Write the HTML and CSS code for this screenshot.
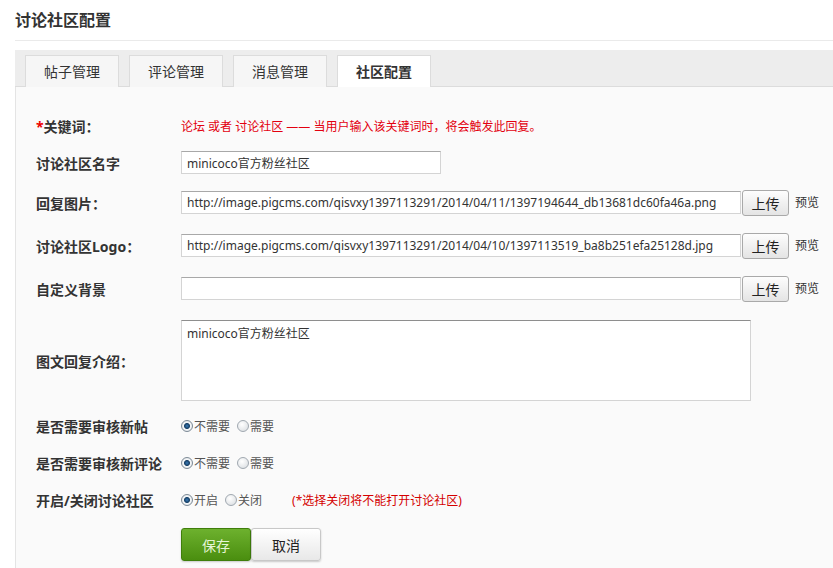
FILE: index.html
```html
<!DOCTYPE html>
<html>
<head>
    <meta charset="utf-8">
    <title>讨论社区配置</title>
    <link rel="stylesheet" href="styles.css">
</head>
<body>
    <div class="page">
        <h1 class="title">讨论社区配置</h1>
        <div class="box">
            <ul class="tabs">
                <li class="tab">帖子管理</li>
                <li class="tab">评论管理</li>
                <li class="tab">消息管理</li>
                <li class="tab active">社区配置</li>
            </ul>
            <div class="panel">
                <div class="row">
                    <label class="lab"><span class="req">*</span>关键词：</label>
                    <span class="hint">论坛 或者 讨论社区 —— 当用户输入该关键词时，将会触发此回复。</span>
                </div>
                <div class="row">
                    <label class="lab">讨论社区名字</label>
                    <input class="ipt short" type="text" value="minicoco官方粉丝社区">
                </div>
                <div class="row tall">
                    <label class="lab">回复图片：</label>
                    <input class="ipt long" type="text" value="http://image.pigcms.com/qisvxy1397113291/2014/04/11/1397194644_db13681dc60fa46a.png">
                    <button class="btn-up">上传</button>
                    <a class="view">预览</a>
                </div>
                <div class="row tall">
                    <label class="lab">讨论社区Logo：</label>
                    <input class="ipt long" type="text" value="http://image.pigcms.com/qisvxy1397113291/2014/04/10/1397113519_ba8b251efa25128d.jpg">
                    <button class="btn-up">上传</button>
                    <a class="view">预览</a>
                </div>
                <div class="row tall">
                    <label class="lab">自定义背景</label>
                    <input class="ipt long" type="text" value="">
                    <button class="btn-up">上传</button>
                    <a class="view">预览</a>
                </div>
                <div class="row area">
                    <label class="lab">图文回复介绍：</label>
                    <textarea class="txt">minicoco官方粉丝社区</textarea>
                </div>
                <div class="row">
                    <label class="lab">是否需要审核新帖</label>
                    <label class="opt"><input class="radio" type="radio" name="post" checked>不需要</label>
                    <label class="opt"><input class="radio" type="radio" name="post">需要</label>
                </div>
                <div class="row">
                    <label class="lab">是否需要审核新评论</label>
                    <label class="opt"><input class="radio" type="radio" name="cmt" checked>不需要</label>
                    <label class="opt"><input class="radio" type="radio" name="cmt">需要</label>
                </div>
                <div class="row">
                    <label class="lab">开启/关闭讨论社区</label>
                    <label class="opt"><input class="radio" type="radio" name="open" checked>开启</label>
                    <label class="opt"><input class="radio" type="radio" name="open">关闭</label>
                    <span class="note">(*选择关闭将不能打开讨论社区)</span>
                </div>
                <div class="actions">
                    <button class="btn save">保存</button><button class="btn cancel">取消</button>
                </div>
            </div>
        </div>
    </div>
</body>
</html>
```
FILE: styles.css
```css
* {
    margin: 0;
    padding: 0;
    box-sizing: border-box;
}

body {
    font-family: "Noto Sans", "Noto Sans CJK SC", sans-serif;
    color: #333;
    background: #fff;
    overflow: hidden;
}

.page {
    padding-left: 15px;
}

.title {
    height: 41px;
    line-height: 40px;
    font-size: 16px;
    font-weight: bold;
    color: #333;
    border-bottom: 1px solid #eaeaea;
}

.box {
    margin-top: 9px;
}

.tabs {
    display: flex;
    gap: 10px;
    height: 37px;
    padding: 5px 0 0 10px;
    list-style: none;
    background: #ededed;
    border-bottom: 1px solid #dcdcdc;
}

.tab {
    width: 94px;
    height: 32px;
    line-height: 31px;
    text-align: center;
    font-size: 14px;
    color: #333;
    background: #f6f6f6;
    border: 1px solid #dcdcdc;
    border-bottom: none;
}

.tab.active {
    background: #fff;
    font-weight: bold;
}

.panel {
    background: #fafafa;
    border-left: 1px solid #e4e4e4;
    padding: 20px 0 20px 20px;
    height: 500px;
}

.row {
    display: flex;
    align-items: center;
    min-height: 37px;
}

.row.tall {
    min-height: 43px;
}

.row.area {
    padding: 10px 0 6px;
}

.lab {
    width: 145px;
    flex: none;
    font-size: 14px;
    font-weight: bold;
    color: #333;
}

.req {
    color: #e00;
}

.hint {
    font-size: 12px;
    color: #e3000f;
}

.ipt {
    height: 23px;
    padding: 0 5px;
    font-family: inherit;
    font-size: 12px;
    color: #333;
    background: #fff;
    border: 1px solid #d4d4d4;
    border-top-color: #a8a8a8;
}

.short {
    width: 260px;
}

.long {
    width: 560px;
}

.btn-up {
    width: 47px;
    height: 26px;
    margin-left: 1px;
    font-family: inherit;
    font-size: 14px;
    color: #222;
    background: linear-gradient(#fdfdfd, #e4e4e4);
    border: 1px solid #a9a9a9;
    border-radius: 3px;
}

.view {
    margin-left: 6px;
    font-size: 12px;
    color: #333;
    margin-top: -2px;
}

.txt {
    width: 570px;
    height: 81px;
    padding: 3px 5px;
    resize: none;
    font-family: inherit;
    font-size: 12px;
    color: #333;
    background: #fff;
    border: 1px solid #d4d4d4;
    border-top-color: #8e8e8e;
}

.opt {
    display: flex;
    align-items: center;
    margin-right: 7px;
    font-size: 12px;
    color: #555;
}

.radio {
    appearance: none;
    width: 12px;
    height: 12px;
    margin-right: 1px;
    border-radius: 50%;
    border: 1px solid #a0a8b0;
    background: radial-gradient(circle at 40% 35%, #fff 0, #d6dade 100%);
}

.radio:checked {
    border-color: #7d8a96;
    background: radial-gradient(circle, #3a7cb8 0, #163f66 2.5px, #f4f6f8 3.5px, #d4d9de 100%);
}

.note {
    margin-left: 23px;
    font-size: 12px;
    color: #d40000;
}

.actions {
    display: flex;
    padding: 10px 0 0 145px;
}

.btn {
    width: 70px;
    height: 33px;
    font-family: inherit;
    font-size: 14px;
    border-radius: 3px;
    box-shadow: 0 1px 2px rgba(0, 0, 0, 0.2);
}

.save {
    color: #e6f5d6;
    background: linear-gradient(#6db12e, #4a8e0f);
    border: 1px solid #3f7e0b;
}

.cancel {
    color: #222;
    background: linear-gradient(#ffffff, #e8e8e8);
    border: 1px solid #c8c8c8;
}
```
